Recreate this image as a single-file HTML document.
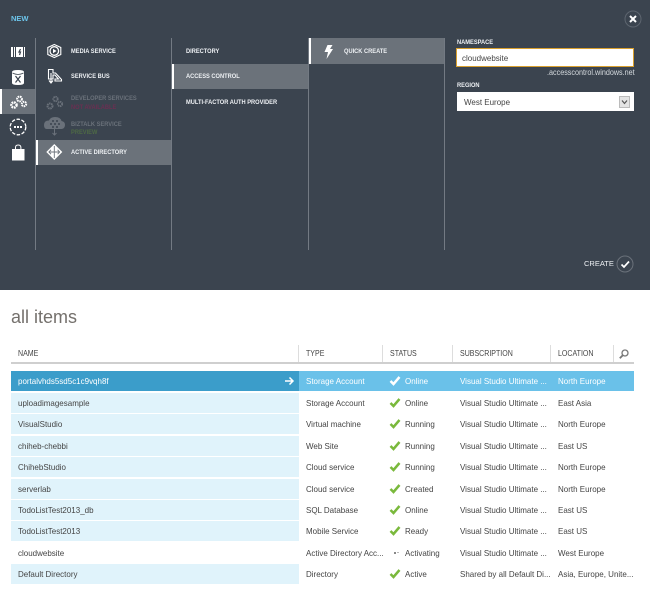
<!DOCTYPE html>
<html><head><meta charset="utf-8"><style>
html,body{margin:0;padding:0;background:#fff}
#p{position:relative;width:650px;height:600px;overflow:hidden;font-family:"Liberation Sans",sans-serif;background:#fff}
#p div,#p svg{position:absolute}
.t{white-space:nowrap;line-height:10px;height:10px;transform-origin:0 50%}
.m{font-size:6.5px;font-weight:bold;color:#eef1f4;transform:scaleX(.88)}
.h{font-size:8px;color:#444;transform:scaleX(.88)}
.c{font-size:8.5px;color:#444;transform:scaleX(.94)}
.w{color:#fff!important}
</style></head><body><div id="p">
<div style="left:0;top:0;width:650px;height:290px;background:#3b444f"></div>
<div class="t" style="left:11px;top:14px;font-size:7.5px;font-weight:bold;color:#6cc4ea">NEW</div>

<!-- separators -->
<div style="left:35px;top:38px;width:1px;height:212px;background:#737a83"></div>
<div style="left:171px;top:38px;width:1px;height:212px;background:#737a83"></div>
<div style="left:308px;top:38px;width:1px;height:212px;background:#737a83"></div>
<div style="left:444px;top:38px;width:1px;height:212px;background:#737a83"></div>

<!-- highlights -->
<div style="left:0;top:89px;width:35px;height:25px;background:#6b727a"></div>
<div style="left:0;top:89px;width:2px;height:25px;background:#fff"></div>
<div style="left:36px;top:140px;width:135px;height:25px;background:#6b727a"></div>
<div style="left:36px;top:140px;width:2px;height:25px;background:#fff"></div>
<div style="left:172px;top:64px;width:136px;height:25px;background:#6b727a"></div>
<div style="left:172px;top:64px;width:2px;height:25px;background:#fff"></div>
<div style="left:309px;top:38px;width:135px;height:26px;background:#6b727a"></div>
<div style="left:309px;top:38px;width:2px;height:26px;background:#fff"></div>

<!-- left icons -->
<svg style="left:0;top:35px" width="36" height="135" viewBox="0 0 36 135">
<g fill="#fff"><rect x="11" y="12" width="2" height="10"/><rect x="14" y="12" width="1" height="10"/><rect x="16" y="12" width="7" height="10"/><rect x="24" y="12" width="1" height="10"/></g>
<path d="M20.500 14l-1.500 3h1.500l-1 3" stroke="#3b444f" stroke-width="1.200" fill="none"/>
<path d="M12 37v11q0 2 6 2t6-2v-11q0-2-6-2t-6 2z" fill="#fff"/>
<path d="M12.500 38q5.500 3 11 0" stroke="#3b444f" fill="none" stroke-width=".8"/>
<path d="M15.500 41l5 6.500M20.500 41l-5 6.500" stroke="#3b444f" stroke-width="1.200"/>
<g fill="none" stroke="#fff"><circle cx="14" cy="70" r="2.600" stroke-width="2.400" stroke-dasharray="1.700 .7"/><circle cx="19.500" cy="64" r="2.400" stroke-width="2" stroke-dasharray="1.600 .7"/><circle cx="24" cy="69" r="2.200" stroke-width="2" stroke-dasharray="1.500 .7"/></g>
<circle cx="18" cy="92" r="7.800" fill="none" stroke="#fff" stroke-width="1.300" stroke-dasharray="3.500 1.500"/>
<g fill="#fff"><rect x="14" y="91" width="2" height="2"/><rect x="17" y="91" width="2" height="2"/><rect x="20" y="91" width="2" height="2"/>
<path d="M12 114h12.500v11.500h-12.500z"/></g>
<path d="M15.500 114.500v-2q0-2.500 2.700-2.500t2.700 2.500v2" fill="none" stroke="#fff" stroke-width="1"/>
</svg>

<!-- middle icons -->
<svg style="left:36px;top:38px" width="36" height="130" viewBox="0 0 36 130">
<path d="M18.300 6.500l6.500 3v7l-6.500 3-6.500-3v-7z" fill="none" stroke="#fff" stroke-width="1.100"/>
<circle cx="18.300" cy="13" r="4.300" fill="#3b444f" stroke="#fff" stroke-width="1.300"/><path d="M17 10.800l3.500 2.200-3.500 2.200z" fill="#fff"/>
<path d="M12.500 31.500h4.500v3.500h2.500l6 6.500v1.500h-6.500v-2h3.500l-3.500-4h-2v4h-4.500z" fill="none" stroke="#fff" stroke-width="1.100"/>
<path d="M15 35v9.500M13 42.500l2 2.500 2-2.500" stroke="#fff" fill="none" stroke-width="1.100"/>
<g fill="none" stroke="#6a717a"><circle cx="14" cy="68" r="2.500" stroke-width="2" stroke-dasharray="1.500 .6"/><circle cx="19.500" cy="61" r="2.200" stroke-width="1.800" stroke-dasharray="1.400 .6"/><circle cx="24" cy="66" r="2.200" stroke-width="1.800" stroke-dasharray="1.400 .6"/></g>
<path d="M11.500 91h14q3.500-.5 3.500-4t-3.500-4q-1-4-6.500-4-4.500 0-6 3.500-5 0-5 4.500t3.500 4z" fill="#6a717a"/>
<path d="M18.500 91v6M16.500 95l2 2 2-2" stroke="#6a717a" fill="none"/>
<g fill="#3b444f"><circle cx="15" cy="86" r="1"/><circle cx="19" cy="86" r="1"/><circle cx="23" cy="86" r="1"/><circle cx="17" cy="83" r="1"/><circle cx="21" cy="83" r="1"/><circle cx="17" cy="89" r="1"/><circle cx="21" cy="89" r="1"/></g>
<path d="M18.300 106l8 8-8 8-8-8z" fill="#fff"/>
<path d="M18.300 108v12M12.500 114h11.500M15 111.800l-2 2.200 2 2.200M21.600 111.800l2 2.200-2 2.200" stroke="#6b727a" fill="none" stroke-width=".9"/>
</svg>

<div class="t m" style="left:71px;top:47px">MEDIA SERVICE</div>
<div class="t m" style="left:71px;top:72px">SERVICE BUS</div>
<div class="t m" style="left:71px;top:94px;color:#6a717a">DEVELOPER SERVICES</div>
<div class="t m" style="left:71px;top:102.500px;color:#6b2f52">NOT AVAILABLE</div>
<div class="t m" style="left:71px;top:120px;color:#6a717a">BIZTALK SERVICE</div>
<div class="t m" style="left:71px;top:127.500px;color:#4e6a45">PREVIEW</div>
<div class="t m" style="left:71px;top:148px">ACTIVE DIRECTORY</div>
<div class="t m" style="left:186px;top:47px">DIRECTORY</div>
<div class="t m" style="left:186px;top:72px">ACCESS CONTROL</div>
<div class="t m" style="left:186px;top:97.500px">MULTI-FACTOR AUTH PROVIDER</div>
<div class="t m" style="left:344px;top:47px">QUICK CREATE</div>
<svg style="left:322px;top:44px" width="12" height="16" viewBox="0 0 12 16"><path d="M5.500 1h5l-2.500 4h3l-6.500 10 1.500-7h-3.500z" fill="#fff"/></svg>

<!-- form -->
<div class="t m" style="left:457px;top:37.500px">NAMESPACE</div>
<div style="left:456px;top:48px;width:176px;height:17px;background:#fff;border:1px solid #d9a02e"></div>
<div class="t c" style="left:462px;top:52.500px">cloudwebsite</div>
<div class="t" style="left:546.500px;top:67.500px;font-size:8px;color:#d5dade;transform:scaleX(.9)">.accesscontrol.windows.net</div>
<div class="t m" style="left:457px;top:81px">REGION</div>
<div style="left:457px;top:92px;width:177px;height:19px;background:#fff"></div>
<div class="t c" style="left:464px;top:97px">West Europe</div>
<div style="left:619px;top:96px;width:9px;height:10px;background:#e4e4e4;border:1px solid #bbb"></div>
<svg style="left:620px;top:97px" width="9" height="10"><path d="M2 3.500l2.500 3 2.500-3" fill="none" stroke="#555" stroke-width="1.200"/></svg>

<!-- close -->
<svg style="left:624px;top:10px" width="18" height="18"><circle cx="9" cy="9" r="8" fill="none" stroke="#5d656f" stroke-width="1"/><path d="M6 6l6 6M12 6l-6 6" stroke="#fff" stroke-width="2"/></svg>
<!-- create -->
<div class="t" style="left:584px;top:259px;font-size:7.5px;color:#eef1f4">CREATE</div>
<svg style="left:616px;top:255px" width="18" height="18"><circle cx="9" cy="9" r="8" fill="none" stroke="#6a717a" stroke-width="1"/><path d="M5.500 9.500l2.500 2.500 5-5.500" fill="none" stroke="#fff" stroke-width="1.700"/></svg>

<!-- all items -->
<div class="t" style="left:11px;top:306px;height:22px;line-height:22px;font-size:18px;color:#74706c">all items</div>

<!-- header -->
<div class="t h" style="left:18px;top:348.500px">NAME</div>
<div class="t h" style="left:306px;top:348.500px">TYPE</div>
<div class="t h" style="left:390px;top:348.500px">STATUS</div>
<div class="t h" style="left:460px;top:348.500px">SUBSCRIPTION</div>
<div class="t h" style="left:557.500px;top:348.500px">LOCATION</div>
<div style="left:11px;top:362px;width:623px;height:2px;background:#cfcfcf"></div>
<div style="left:298px;top:345px;width:1px;height:17px;background:#ddd"></div>
<div style="left:382px;top:345px;width:1px;height:17px;background:#ddd"></div>
<div style="left:452px;top:345px;width:1px;height:17px;background:#ddd"></div>
<div style="left:550px;top:345px;width:1px;height:17px;background:#ddd"></div>
<div style="left:613px;top:345px;width:1px;height:17px;background:#ddd"></div>
<svg style="left:618px;top:348px" width="12" height="12"><circle cx="7" cy="5" r="3" fill="none" stroke="#777" stroke-width="1.300"/><path d="M4.800 7.200l-3 3" stroke="#777" stroke-width="1.800"/></svg>

<!-- rows bg -->
<div style="left:11px;top:371px;width:288px;height:20px;background:#3b9dca"></div>
<div style="left:299px;top:371px;width:335px;height:20px;background:#6ac1e9"></div>
<div style="left:11px;top:392.500px;width:288px;height:20px;background:#e0f3fb"></div>
<div style="left:11px;top:414px;width:288px;height:20px;background:#e0f3fb"></div>
<div style="left:11px;top:435.500px;width:288px;height:20px;background:#e0f3fb"></div>
<div style="left:11px;top:457px;width:288px;height:20px;background:#e0f3fb"></div>
<div style="left:11px;top:478.500px;width:288px;height:20px;background:#e0f3fb"></div>
<div style="left:11px;top:500px;width:288px;height:20px;background:#e0f3fb"></div>
<div style="left:11px;top:521px;width:288px;height:20px;background:#e0f3fb"></div>
<div style="left:11px;top:564px;width:288px;height:20px;background:#e0f3fb"></div>

<svg style="left:284px;top:376px" width="11" height="10"><path d="M1 5h8M5.500 1.500l3.500 3.500-3.500 3.500" fill="none" stroke="#fff" stroke-width="1.500"/></svg>

<!-- row 1 -->
<div class="t c w" style="left:18px;top:376px">portalvhds5sd5c1c9vqh8f</div>
<div class="t c w" style="left:306px;top:376px">Storage Account</div>
<div class="t c w" style="left:405px;top:376px">Online</div>
<div class="t c w" style="left:459.500px;top:376px">Visual Studio Ultimate ...</div>
<div class="t c w" style="left:557.500px;top:376px">North Europe</div>
<!-- row 2 -->
<div class="t c" style="left:18px;top:397.500px">uploadimagesample</div>
<div class="t c" style="left:306px;top:397.500px">Storage Account</div>
<div class="t c" style="left:405px;top:397.500px">Online</div>
<div class="t c" style="left:459.500px;top:397.500px">Visual Studio Ultimate ...</div>
<div class="t c" style="left:557.500px;top:397.500px">East Asia</div>
<!-- row 3 -->
<div class="t c" style="left:18px;top:419px">VisualStudio</div>
<div class="t c" style="left:306px;top:419px">Virtual machine</div>
<div class="t c" style="left:405px;top:419px">Running</div>
<div class="t c" style="left:459.500px;top:419px">Visual Studio Ultimate ...</div>
<div class="t c" style="left:557.500px;top:419px">North Europe</div>
<!-- row 4 -->
<div class="t c" style="left:18px;top:440.500px">chiheb-chebbi</div>
<div class="t c" style="left:306px;top:440.500px">Web Site</div>
<div class="t c" style="left:405px;top:440.500px">Running</div>
<div class="t c" style="left:459.500px;top:440.500px">Visual Studio Ultimate ...</div>
<div class="t c" style="left:557.500px;top:440.500px">East US</div>
<!-- row 5 -->
<div class="t c" style="left:18px;top:462px">ChihebStudio</div>
<div class="t c" style="left:306px;top:462px">Cloud service</div>
<div class="t c" style="left:405px;top:462px">Running</div>
<div class="t c" style="left:459.500px;top:462px">Visual Studio Ultimate ...</div>
<div class="t c" style="left:557.500px;top:462px">North Europe</div>
<!-- row 6 -->
<div class="t c" style="left:18px;top:483.500px">serverlab</div>
<div class="t c" style="left:306px;top:483.500px">Cloud service</div>
<div class="t c" style="left:405px;top:483.500px">Created</div>
<div class="t c" style="left:459.500px;top:483.500px">Visual Studio Ultimate ...</div>
<div class="t c" style="left:557.500px;top:483.500px">North Europe</div>
<!-- row 7 -->
<div class="t c" style="left:18px;top:505px">TodoListTest2013_db</div>
<div class="t c" style="left:306px;top:505px">SQL Database</div>
<div class="t c" style="left:405px;top:505px">Online</div>
<div class="t c" style="left:459.500px;top:505px">Visual Studio Ultimate ...</div>
<div class="t c" style="left:557.500px;top:505px">East US</div>
<!-- row 8 -->
<div class="t c" style="left:18px;top:526px">TodoListTest2013</div>
<div class="t c" style="left:306px;top:526px">Mobile Service</div>
<div class="t c" style="left:405px;top:526px">Ready</div>
<div class="t c" style="left:459.500px;top:526px">Visual Studio Ultimate ...</div>
<div class="t c" style="left:557.500px;top:526px">East US</div>
<!-- row 9 -->
<div class="t c" style="left:18px;top:548px">cloudwebsite</div>
<div class="t c" style="left:306px;top:548px">Active Directory Acc...</div>
<div class="t c" style="left:405px;top:548px">Activating</div>
<div class="t c" style="left:459.500px;top:548px">Visual Studio Ultimate ...</div>
<div class="t c" style="left:557.500px;top:548px">West Europe</div>
<!-- row 10 -->
<div class="t c" style="left:18px;top:569px">Default Directory</div>
<div class="t c" style="left:306px;top:569px">Directory</div>
<div class="t c" style="left:405px;top:569px">Active</div>
<div class="t c" style="left:459.500px;top:569px">Shared by all Default Di...</div>
<div class="t c" style="left:557.500px;top:569px">Asia, Europe, Unite...</div>

<!-- checks -->
<svg style="left:389px;top:375px" width="12" height="12"><path d="M1.500 6l3 3 6-7" fill="none" stroke="#fff" stroke-width="2.500"/></svg>
<svg style="left:389px;top:396.500px" width="12" height="12"><path d="M1.500 6l3 3 6-7" fill="none" stroke="#7ab93c" stroke-width="2.500"/></svg>
<svg style="left:389px;top:418px" width="12" height="12"><path d="M1.500 6l3 3 6-7" fill="none" stroke="#7ab93c" stroke-width="2.500"/></svg>
<svg style="left:389px;top:439.500px" width="12" height="12"><path d="M1.500 6l3 3 6-7" fill="none" stroke="#7ab93c" stroke-width="2.500"/></svg>
<svg style="left:389px;top:461px" width="12" height="12"><path d="M1.500 6l3 3 6-7" fill="none" stroke="#7ab93c" stroke-width="2.500"/></svg>
<svg style="left:389px;top:482.500px" width="12" height="12"><path d="M1.500 6l3 3 6-7" fill="none" stroke="#7ab93c" stroke-width="2.500"/></svg>
<svg style="left:389px;top:504px" width="12" height="12"><path d="M1.500 6l3 3 6-7" fill="none" stroke="#7ab93c" stroke-width="2.500"/></svg>
<svg style="left:389px;top:525px" width="12" height="12"><path d="M1.500 6l3 3 6-7" fill="none" stroke="#7ab93c" stroke-width="2.500"/></svg>
<svg style="left:389px;top:568px" width="12" height="12"><path d="M1.500 6l3 3 6-7" fill="none" stroke="#7ab93c" stroke-width="2.500"/></svg>
<div style="left:394px;top:551.500px;width:2px;height:2px;background:#888"></div>
<div style="left:397px;top:552px;width:2px;height:1px;background:#bbb"></div>
</div></body></html>
